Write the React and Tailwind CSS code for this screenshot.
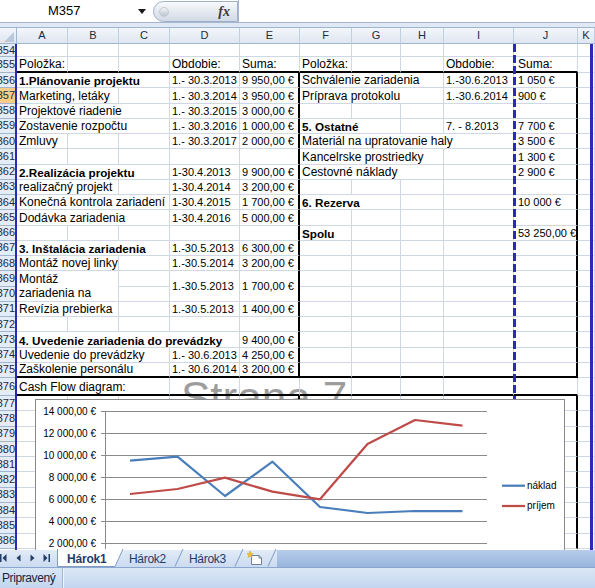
import React from "react";

const COLS = ["A", "B", "C", "D", "E", "F", "G", "H", "I", "J", "K"];

const c = (t = "", s = 1, o = {}) => ({ t, s, ...o });
const b = (t, s = 1) => c(t, s, { k: "b" });
const n = (t, s = 1, o = {}) => c(t, s, { k: "n", ...o });
const j = (t = "", k = "n") => c(t, 1, { k, j: true });

const emptyL = () => [c(), c(), c(), c(), c()];
const emptyR = () => [c(), c(), c(), c(), j()];

const ROWS = [
  { n: 354, l: emptyL(), r: emptyR() },
  {
    n: 355,
    tb: true,
    l: [c("Položka:"), c(), c(), c("Obdobie:"), c("Suma:")],
    r: [c("Položka:"), c(), c(), c("Obdobie:"), j("Suma:", "t")],
  },
  {
    n: 356,
    box: true,
    l: [b("1.Plánovanie projektu", 3), n("1.- 30.3.2013"), n("9 950,00 €")],
    r: [c("Schválenie zariadenia", 3), n("1.-30.6.2013"), j("1 050 €")],
  },
  {
    n: 357,
    box: true,
    sel: true,
    l: [c("Marketing, letáky", 2), c(), n("1.- 30.3.2014"), n("3 950,00 €")],
    r: [c("Príprava protokolu", 3), n("1.-30.6.2014"), j("900 €")],
  },
  { n: 358, box: true, l: [c("Projektové riadenie", 3), n("1.- 30.3.2015"), n("3 000,00 €")], r: emptyR() },
  {
    n: 359,
    box: true,
    l: [c("Zostavenie rozpočtu", 3), n("1.- 30.3.2016"), n("1 000,00 €")],
    r: [b("5. Ostatné", 2), c(), n("7. - 8.2013"), j("7 700 €")],
  },
  {
    n: 360,
    box: true,
    l: [c("Zmluvy"), c(), c(), n("1.- 30.3.2017"), n("2 000,00 €")],
    r: [c("Materiál na upratovanie haly", 4), j("3 500 €")],
  },
  { n: 361, box: true, l: emptyL(), r: [c("Kancelrske prostriedky", 3), c(), j("1 300 €")] },
  {
    n: 362,
    box: true,
    l: [b("2.Realizácia projektu", 3), n("1-30.4.2013"), n("9 900,00 €")],
    r: [c("Cestovné náklady", 3), c(), j("2 900 €")],
  },
  { n: 363, box: true, l: [c("realizačný projekt", 2), c(), n("1-30.4.2014"), n("3 200,00 €")], r: emptyR() },
  {
    n: 364,
    box: true,
    l: [c("Konečná kontrola zariadení", 3), n("1-30.4.2015"), n("1 700,00 €")],
    r: [b("6. Rezerva", 2), c(), c(), j("10 000 €")],
  },
  { n: 365, box: true, l: [c("Dodávka zariadenia", 3), n("1-30.4.2016"), n("5 000,00 €")], r: emptyR() },
  { n: 366, box: true, l: emptyL(), r: [b("Spolu"), c(), c(), c(), j("53 250,00 €")] },
  { n: 367, box: true, l: [b("3. Inštalácia zariadenia", 3), n("1.-30.5.2013"), n("6 300,00 €")], r: emptyR() },
  { n: 368, box: true, l: [c("Montáž novej linky", 2), c(), n("1.-30.5.2014"), n("3 200,00 €")], r: emptyR() },
  {
    n: 369,
    box: true,
    l: [
      c("Montáž\nzariadenia na", 2, { r: 2, wrap: true }),
      c(),
      n("1.-30.5.2013", 1, { r: 2, mid: true }),
      n("1 700,00 €", 1, { r: 2, mid: true }),
    ],
    r: emptyR(),
  },
  { n: 370, box: true, skipE: true, l: [c()], r: emptyR() },
  { n: 371, box: true, l: [c("Revízia prebierka", 2), c(), n("1.-30.5.2013"), n("1 400,00 €")], r: emptyR() },
  { n: 372, box: true, l: emptyL(), r: emptyR() },
  { n: 373, box: true, l: [b("4. Uvedenie zariadenia do prevádzky", 4), n("9 400,00 €")], r: emptyR() },
  { n: 374, box: true, l: [c("Uvedenie do prevádzky", 3), n("1.- 30.6.2013"), n("4 250,00 €")], r: emptyR() },
  {
    n: 375,
    box: true,
    tb: true,
    l: [c("Zaškolenie personálu", 3), n("1.- 30.6.2014"), n("3 200,00 €")],
    r: emptyR(),
  },
  { n: 376, tb: true, l: [c("Cash Flow diagram:", 3), c(), c()], r: emptyR() },
  ...[377, 378, 379, 380, 381, 382, 383, 384, 385, 386].map((num) => ({ n: num, box: true, l: emptyL(), r: emptyR() })),
];

const SPANS = { 1: "", 2: "col-span-2", 3: "col-span-3", 4: "col-span-4" };

const Cell = ({ cell, thickB, thickR }) => {
  const bottom = thickB ? "border-b-2 border-b-black" : "border-b border-b-[#d0d7e5]";
  const right = thickR ? "border-r-2 border-r-black" : "border-r border-r-[#d0d7e5]";
  const size = cell.k === "b" ? "text-[11.7px] font-bold" : cell.k === "n" ? "text-[11px]" : "text-[12px]";
  const align = cell.mid ? "items-center" : "items-end";
  const pad = cell.j ? "pl-[4px]" : "pl-[2px]";
  const wrap = cell.wrap ? "whitespace-pre-line leading-[14.5px]" : "whitespace-nowrap leading-[13px]";
  return (
    <div
      className={`flex overflow-hidden text-black ${bottom} ${right} ${size} ${SPANS[cell.s]} ${cell.r === 2 ? "row-span-2" : ""} ${align} ${pad} ${wrap}`}
    >
      {cell.t}
    </div>
  );
};

const RowHead = ({ num, sel }) => (
  <div
    className={`flex items-center justify-end overflow-hidden whitespace-nowrap border-b border-r border-[#9eb6ce] pr-px text-[11px] leading-none text-[#1e2b3c] ${
      sel ? "bg-[#f8cd86]" : "bg-[#e4ecf7]"
    }`}
  >
    {num}
  </div>
);

const FormulaBar = () => (
  <div className="flex h-[27px] flex-col bg-[#dfe8f4]">
    <div className="flex h-[23px] border-b border-[#a5b7cf] bg-white">
      <div className="flex w-[150px] items-center">
        <span className="pl-[48px] text-[13px] text-black">M357</span>
        <svg width="8" height="5" viewBox="0 0 8 5" className="ml-auto mr-[4px]">
          <path d="M0 0 H8 L4 5 Z" fill="#1a1a1a" />
        </svg>
      </div>
      <div className="ml-[3px] mt-px flex h-[21px] w-[85px] items-center rounded-l-full border border-[#9fb0c8] bg-linear-to-b from-[#f7f9fc] to-[#d3dae5]">
        <div className="ml-[5px] h-[10px] w-[10px] rounded-full border border-[#c3c9d2] bg-linear-to-b from-[#f2f4f7] to-[#bcc4ce]" />
        <span className="ml-auto mr-[7px] font-['Liberation_Serif',serif] text-[14px] font-bold italic leading-none text-[#3b3b3b]">
          fx
        </span>
      </div>
      <div className="flex-1 border-l border-[#a5b7cf] bg-white" />
    </div>
  </div>
);

const ColumnHeader = () => (
  <div className="grid h-[17px] grid-cols-[17px_51px_51px_51px_70px_60px_52px_49px_43px_70px_64px_17px] border-t border-[#9eb6ce]">
    <div className="relative border-b border-r border-[#9eb6ce] bg-linear-to-b from-[#f3f6fb] to-[#dfe6f0]">
      <svg width="17" height="16" className="absolute left-0 top-0">
        <path d="M14 4 L14 14 L4 14 Z" fill="#b9c8dc" />
      </svg>
    </div>
    {COLS.map((col) => (
      <div
        key={col}
        className="flex items-center justify-center border-b border-r border-b-[#9eb6ce] border-r-[#c1cfe2] bg-linear-to-b from-[#f3f6fb] to-[#dfe6f0] text-[11px] leading-none text-[#1e2b3c]"
      >
        {col}
      </div>
    ))}
  </div>
);

const BLUE = [61.7, 57.7, 97, 62.7, 108, 114, 112, 112];
const RED = [95, 90, 78.7, 92.7, 100.3, 45, 21, 26.7];
const LABELS = ["14 000,00 €", "12 000,00 €", "10 000,00 €", "8 000,00 €", "6 000,00 €", "4 000,00 €", "2 000,00 €", "0,00 €"];

const Chart = () => {
  const xs = BLUE.map((_, i) => 95 + i * 47.5);
  const pts = (arr) => arr.map((y, i) => `${xs[i]},${y}`).join(" ");
  const font = "Liberation Sans, Arial, sans-serif";
  return (
    <div className="absolute left-[35px] top-[355px] h-[200px] w-[530px] border border-[#8a8a8a] bg-white">
      <svg width="530" height="200" className="absolute -left-px -top-px">
        {LABELS.map((label, i) => {
          const y = 12.5 + i * 22;
          return (
            <g key={label}>
              <line x1="66" x2="452" y1={y} y2={y} stroke="#8a8a8a" strokeWidth="1" />
              <text x="61" y={y + 3.6} textAnchor="end" fontSize="10" fill="#000" fontFamily={font}>
                {label}
              </text>
            </g>
          );
        })}
        <line x1="70.5" x2="70.5" y1="12.5" y2="200" stroke="#8a8a8a" strokeWidth="1" />
        <polyline points={pts(BLUE)} fill="none" stroke="#4a7ebb" strokeWidth="2.25" strokeLinejoin="round" />
        <polyline points={pts(RED)} fill="none" stroke="#be4b48" strokeWidth="2.25" strokeLinejoin="round" />
        <line x1="467" x2="490" y1="86.7" y2="86.7" stroke="#4a7ebb" strokeWidth="2.25" />
        <text x="492" y="90.4" fontSize="10" fill="#000" fontFamily={font}>
          náklad
        </text>
        <line x1="467" x2="490" y1="107" y2="107" stroke="#be4b48" strokeWidth="2.25" />
        <text x="492" y="110.4" fontSize="10" fill="#000" fontFamily={font}>
          príjem
        </text>
      </svg>
    </div>
  );
};

const Sheet = () => {
  const cells = [];
  ROWS.forEach((row) => {
    cells.push(<RowHead key={`h${row.n}`} num={row.n} sel={row.sel} />);
    [row.l, row.r].forEach((group, gi) =>
      group.forEach((cell, ci) => {
        const last = ci === group.length - 1;
        const thickR = last && row.box && (gi === 0 ? !row.skipE : true);
        cells.push(<Cell key={`${row.n}-${gi}-${ci}`} cell={cell} thickB={row.tb} thickR={thickR} />);
      })
    );
    cells.push(<Cell key={`${row.n}-k`} cell={c()} thickB={false} thickR={false} />);
  });

  return (
    <div className="relative isolate h-[506px] overflow-hidden bg-white">
      <div className="absolute left-[181px] top-[332px] -z-10 whitespace-nowrap text-[44px] leading-none text-[#9d9d9d]">
        Strana 7
      </div>
      <div className="grid grid-cols-[17px_51px_51px_51px_70px_60px_52px_49px_43px_70px_64px_17px] grid-rows-[13px_16px_repeat(20,15.25px)_18px_repeat(10,15.3px)]">
        {cells}
      </div>
      <div className="absolute left-[15px] top-0 h-full w-[2px] bg-[#2a2ab4]" />
      <div className="absolute left-[590px] top-0 h-full w-[3px] bg-[#2a2ab4]" />
      <svg width="3" height="356" className="absolute left-[513px] top-0">
        <line x1="1.5" x2="1.5" y1="0" y2="356" stroke="#2a2ab4" strokeWidth="3" strokeDasharray="8 3" />
      </svg>
      <Chart />
    </div>
  );
};

const Tab = ({ label, active, width, pad }) => (
  <div className={`relative flex items-center ${width}`}>
    <svg width="70" height="17" className="absolute left-0 top-0 overflow-visible">
      {active ? (
        <path d="M0.5 -1 V16.5 H58 L66 -1" fill="#ffffff" stroke="#7f9cc6" strokeWidth="1" />
      ) : null}
      {!active && label ? <path d="M52 16.5 L60 -1" fill="none" stroke="#7f9cc6" strokeWidth="1" /> : null}
    </svg>
    <span
      className={`relative ${pad} text-[12px] leading-none text-[#1f3b6b] ${
        active ? "font-bold tracking-[-0.2px]" : "tracking-[-0.3px]"
      }`}
    >
      {label}
    </span>
  </div>
);

const TabBar = () => (
  <div className="flex h-[17px] bg-linear-to-b from-[#e2ebf7] to-[#cbdbf0]">
    <div className="w-[57px]">
      <svg width="57" height="17" viewBox="0 0 57 17">
        <rect x="0" y="4" width="1.5" height="8" fill="#223d66" />
        <path d="M6.5 4 L2.5 8 L6.5 12 Z" fill="#223d66" />
        <path d="M20.5 4.5 L16.5 8 L20.5 11.5 Z" fill="#223d66" />
        <path d="M30.5 4.5 L34.5 8 L30.5 11.5 Z" fill="#223d66" />
        <path d="M43.5 4 L47.5 8 L43.5 12 Z" fill="#223d66" />
        <rect x="48.5" y="4" width="1.5" height="8" fill="#223d66" />
      </svg>
    </div>
    <Tab label="Hárok1" active width="w-[66px]" pad="pl-[10px]" />
    <Tab label="Hárok2" width="w-[60px]" pad="pl-[6px]" />
    <Tab label="Hárok3" width="w-[60px]" pad="pl-[6px]" />
    <div className="relative w-[34px]">
      <svg width="40" height="17" className="absolute left-0 top-0 overflow-visible">
        <path d="M8.5 5.5 H16 L18.5 8 V14.5 H8.5 Z" fill="#ffffff" stroke="#6f819b" strokeWidth="1" />
        <path d="M16 5.5 V8 H18.5" fill="none" stroke="#6f819b" strokeWidth="1" />
        <path d="M7 1 L7.8 3.4 L10 3.6 L8.3 5 L8.9 7.4 L7 6 L5.1 7.4 L5.7 5 L4 3.6 L6.2 3.4 Z" fill="#f3c32a" stroke="#d19a12" strokeWidth="0.5" />
        <path d="M25 16.5 L33 -1" fill="none" stroke="#7f9cc6" strokeWidth="1" />
      </svg>
    </div>
    <div className="flex-1 bg-linear-to-b from-[#b7cce9] to-[#98b5de]" />
  </div>
);

const StatusBar = () => (
  <div className="flex h-[21px] items-center border-t border-[#8ba7cf] bg-linear-to-b from-[#dae6f5] to-[#c3d6ef]">
    <span className="w-[62px] pl-[2px] text-[12px] tracking-[-0.4px] text-[#18243a]">Pripravený</span>
    <div className="h-full w-px bg-[#9fb6d6]" />
    <div className="h-full w-px bg-[#eef4fb]" />
  </div>
);

const App = () => (
  <div className="h-[588px] w-[595px] overflow-hidden bg-white font-['Liberation_Sans',Arial,sans-serif]">
    <FormulaBar />
    <ColumnHeader />
    <Sheet />
    <TabBar />
    <StatusBar />
  </div>
);

export default App;
